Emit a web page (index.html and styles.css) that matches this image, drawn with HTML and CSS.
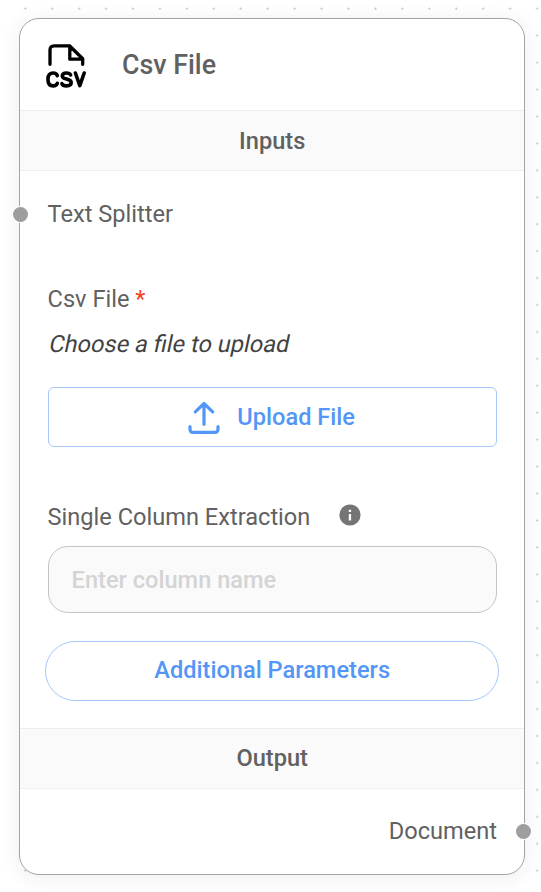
FILE: index.html
```
<!DOCTYPE html>
<html lang="en">
<head>
<meta charset="utf-8">
<title>Csv File</title>
<link rel="stylesheet" href="styles.css">
</head>
<body>
<main class="node">
  <header class="node-header">
    <svg class="csv-icon" viewBox="0 0 42 46" fill="none" stroke="#000" stroke-width="3.3" stroke-linecap="round" stroke-linejoin="round" aria-hidden="true">
      <path d="M5 21.3V7Q5 2.8 9.2 2.8H24.5L37.7 15.8V21.3M24.8 3V16.2H37.5"/>
      <path stroke-width="3.6" d="M12.3 32.6C11.6 30.7 10.2 30 8.2 30C5 30 3 32.3 3 35.6V37C3 40.7 5 42.9 8.2 42.9C10.2 42.9 11.6 42.1 12.3 40.3M25.6 31.9C24.8 30.6 23.4 30 21.6 30C19.1 30 17.3 31 17.3 33C17.3 37 26.2 35.2 26.2 39.6C26.2 41.8 24.2 42.9 21.5 42.9C19.2 42.9 17.6 42.2 16.9 40.7M30.4 30L34.8 42.6L39.2 30"/>
    </svg>
    <h1 class="node-title">Csv File</h1>
  </header>
  <h2 class="section">Inputs</h2>
  <section class="inputs">
    <div class="row label splitter"><span>Text Splitter</span><i class="handle handle-in"></i></div>
    <div class="label file-label">Csv File <span class="required">*</span></div>
    <div class="hint">Choose a file to upload</div>
    <button class="upload">
      <svg class="upload-icon" viewBox="0 0 32 34" fill="none" stroke="currentColor" stroke-width="3.2" stroke-linecap="round" stroke-linejoin="round" aria-hidden="true">
        <path d="M2 25.7V28.2Q2 31.4 5.2 31.4H26.8Q30 31.4 30 28.2V25.7M7.3 10.8L16 2.5L24.7 10.8M16 2.5V23.3"/>
      </svg>
      <span>Upload File</span>
    </button>
    <div class="label column-label">
      <span>Single Column Extraction</span>
      <svg class="info" viewBox="0 0 22 22" aria-hidden="true"><circle cx="11" cy="11" r="10.6" fill="#757575"/><path fill="#fff" d="M9.8 5.7h2.3v2.2H9.8zM9.8 9.9h2.3v6.5H9.8z"/></svg>
    </div>
    <input class="field" type="text" placeholder="Enter column name">
    <button class="params">Additional Parameters</button>
  </section>
  <h2 class="section section-output">Output</h2>
  <div class="row label output"><span>Document</span><i class="handle handle-out"></i></div>
</main>
</body>
</html>
```
FILE: styles.css
```
* { box-sizing: border-box; }
html { overflow: hidden; }
body {
  margin: 0;
  height: 892px;
  padding: 18px 16px 0 19.4px;
  overflow: hidden;
  font-family: Roboto, sans-serif;
  color: #616161;
  background-color: #fff;
  background-image: radial-gradient(circle, #bdbdbd 0.7px, transparent 1.35px);
  background-size: 26.95px 26.95px;
  background-position: 11.8px -4.8px;
}
.node {
  display: flex;
  flex-direction: column;
  height: 857px;
  border: 1.4px solid #a4a4a4;
  border-radius: 20px;
  background: #fff;
  box-shadow: 0 3px 21px rgba(32, 40, 45, 0.08);
}
.node-header {
  display: flex;
  align-items: center;
  height: 91px;
  padding-left: 24.8px;
}
.csv-icon { width: 42px; height: 46px; margin-top: 2px; }
.node-title {
  margin: 1px 0 0 34.8px;
  font-size: 26.8px;
  line-height: 32px;
  font-weight: 500;
}
.section {
  flex: none;
  height: 61px;
  margin: 0;
  border: solid #eee;
  border-width: 1px 0;
  background: #fafafa;
  font-size: 23.6px;
  line-height: 60px;
  font-weight: 500;
  text-align: center;
}
.section-output { line-height: 58px; }
.inputs {
  display: flex;
  flex-direction: column;
  height: 557px;
  padding: 0 27.2px;
}
.label { font-size: 23.6px; line-height: 30px; }
.row { position: relative; }
.splitter { margin-top: 28px; }
.file-label { margin-top: 55px; }
.required { color: #f4401f; }
.hint {
  margin-top: 15px;
  color: #424242;
  font-size: 23.6px;
  line-height: 30px;
  transform: skewX(-12deg);
  transform-origin: 0 23px;
}
.upload, .params {
  display: flex;
  align-items: center;
  justify-content: center;
  flex: none;
  padding: 0;
  border: 1px solid #a6c8fa;
  background: #fff;
  color: #5396f6;
  font: 500 23.6px/30px Roboto, sans-serif;
}
.upload {
  height: 60px;
  margin-top: 28px;
  padding-right: 1.6px;
  gap: 17.5px;
  border-radius: 6px;
}
.upload span { margin-top: -1px; }
.upload-icon { width: 32px; height: 34px; margin-top: 1px; }
.column-label {
  display: flex;
  align-items: center;
  margin-top: 55px;
  gap: 29px;
}
.info { width: 22px; height: 22px; margin-top: -4px; }
.field {
  flex: none;
  width: 100%;
  height: 67px;
  margin-top: 14px;
  padding: 0 23px;
  border: 1.3px solid #c4c4c4;
  border-radius: 20px;
  background: #fafafa;
  color: #616161;
  font: 500 23.6px/30px Roboto, sans-serif;
}
.field::placeholder { color: #d4d4d4; opacity: 1; }
.params {
  height: 60px;
  margin: 28px -2.4px 0;
  padding-bottom: 2px;
  border-radius: 31px;
}
.output {
  margin-top: 27px;
  padding-right: 27px;
  text-align: right;
}
.handle {
  position: absolute;
  top: 8.4px;
  width: 15px;
  height: 15px;
  border-radius: 50%;
  background: #9e9e9e;
  box-shadow: 0 0 0 1px #fff;
}
.handle-in { left: -7px; }
.handle-out { right: -6.5px; }
.splitter .handle-in { left: -34.2px; }
```
